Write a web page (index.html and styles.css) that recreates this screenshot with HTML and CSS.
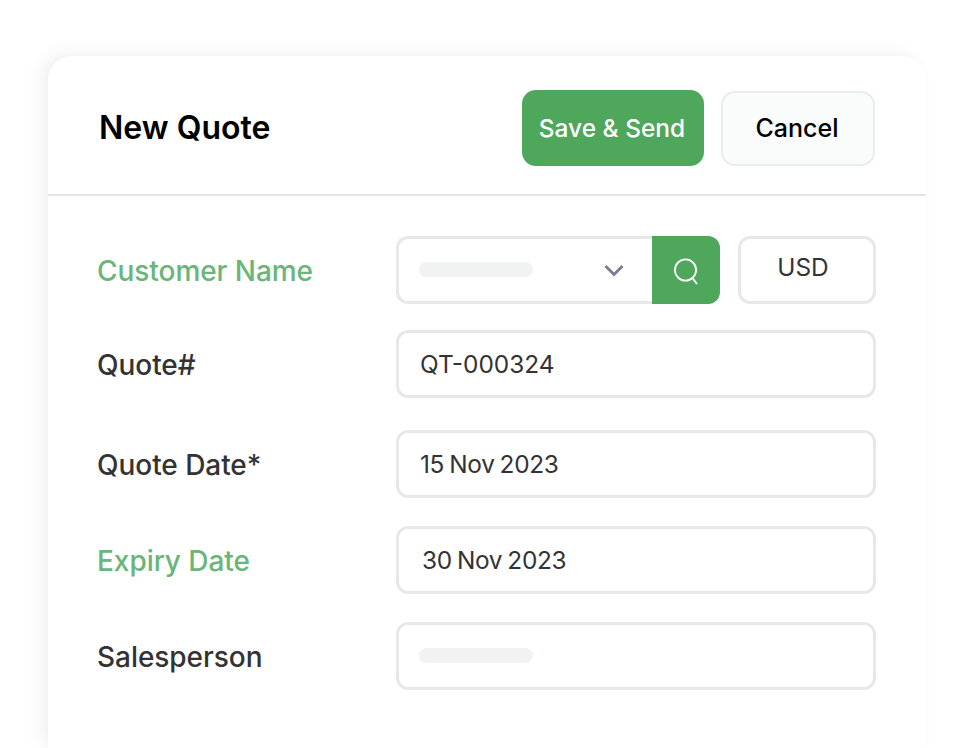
FILE: index.html
```html
<!DOCTYPE html>
<html lang="en">
<head>
    <meta charset="UTF-8">
    <meta name="viewport" content="width=device-width, initial-scale=1.0">
    <title>New Quote</title>
    <link rel="stylesheet" href="styles.css">
</head>
<body>
    <div class="card">
        <div class="header">
            <h1 class="title">New Quote</h1>
            <button class="btn save">Save &amp; Send</button>
            <button class="btn cancel">Cancel</button>
        </div>
        <div class="form">
            <div class="row row-customer">
                <div class="label accent">Customer Name</div>
                <div class="customer-group">
                    <div class="field select">
                        <span class="placeholder"></span>
                        <svg class="chevron" width="20" height="13" viewBox="0 0 20 13">
                            <path d="M1.5 2 L10 10.5 L18.5 2" fill="none" stroke="#807b90" stroke-width="3"/>
                        </svg>
                    </div>
                    <div class="search">
                        <svg width="26" height="30" viewBox="0 0 26 30">
                            <circle cx="12.5" cy="15" r="10.6" fill="none" stroke="#fff" stroke-width="1.8"/>
                            <path d="M19.5 23 L24 29" fill="none" stroke="#fff" stroke-width="1.8"/>
                        </svg>
                    </div>
                </div>
                <div class="field currency">USD</div>
            </div>
            <div class="row row-number">
                <div class="label">Quote#</div>
                <div class="field">QT-000324</div>
            </div>
            <div class="row row-date">
                <div class="label">Quote Date*</div>
                <div class="field field-date">15 Nov 2023</div>
            </div>
            <div class="row row-expiry">
                <div class="label accent">Expiry Date</div>
                <div class="field field-date field-expiry">30 Nov 2023</div>
            </div>
            <div class="row row-sales">
                <div class="label">Salesperson</div>
                <div class="field"><span class="placeholder"></span></div>
            </div>
        </div>
    </div>
</body>
</html>
```

FILE: styles.css
```css
html, body {
    height: 100%;
}
body {
    margin: 0;
    overflow: hidden;
    background-color: #fff;
    font-family: Inter, 'Noto Sans', sans-serif;
    color: #333;
}
.card {
    margin: 56px 48px 0 48px;
    height: 692px;
    background-color: #fff;
    border-radius: 24px 24px 0 0;
    box-shadow: -8px -4px 16px rgba(0, 0, 0, 0.05), 0 0 6px rgba(0, 0, 0, 0.02);
}
.header {
    display: flex;
    align-items: center;
    padding: 6px 51px 0 51px;
    border-bottom: 2px solid #e4e5e5;
    box-sizing: border-box;
    height: 140px;
}
.title {
    flex: 1;
    margin: 0 0 2px 0;
    font-size: 32px;
    font-weight: 600;
    color: #000;
}
.btn {
    height: 76px;
    border-radius: 14px;
    font-family: inherit;
    font-weight: 500;
    box-sizing: border-box;
}
.btn.save {
    width: 182px;
    padding: 0 2px 1px 0;
    background-color: #4fa75c;
    border: 0;
    font-size: 24.5px;
    color: #fff;
}
.btn.cancel {
    width: 154px;
    height: 75px;
    margin-left: 17px;
    padding: 0 2px 0 0;
    background-color: #fafbfb;
    border: 2px solid #e8eded;
    font-size: 25px;
    color: #000;
}
.form {
    padding: 40px 50px 0 49px;
}
.row {
    display: flex;
    align-items: center;
    height: 68px;
}
.row-number {
    margin-top: 26px;
}
.row-date {
    margin-top: 32px;
}
.row-expiry, .row-sales {
    margin-top: 28px;
}
.label {
    width: 299px;
    padding-top: 1px;
    font-size: 28px;
    font-weight: 500;
    letter-spacing: -0.05px;
    color: #333;
}
.label.accent {
    color: #6ab577;
}
.field {
    display: flex;
    align-items: center;
    flex: 1;
    height: 68px;
    padding: 0 21px;
    background-color: #fff;
    border: 3px solid #e8e8e8;
    border-radius: 12px;
    box-sizing: border-box;
    font-size: 24.4px;
    color: #333;
}
.field-date {
    word-spacing: -1.5px;
    letter-spacing: -0.3px;
}
.field-expiry {
    padding-left: 23px;
}
.placeholder {
    display: block;
    width: 114px;
    height: 15px;
    margin: 0 0 1px -1px;
    background-color: #f1f2f4;
    border-radius: 8px;
}
.customer-group {
    display: flex;
    width: 324px;
}
.field.select {
    justify-content: space-between;
    border-right: 0;
    border-radius: 12px 0 0 12px;
    padding-right: 28px;
}
.search {
    display: flex;
    align-items: center;
    justify-content: center;
    flex: none;
    width: 68px;
    height: 68px;
    background-color: #4fa75c;
    border-radius: 0 12px 12px 0;
}
.field.currency {
    flex: none;
    justify-content: center;
    width: 138px;
    margin-left: 18px;
    padding: 0 8px 6px 0;
}
```
